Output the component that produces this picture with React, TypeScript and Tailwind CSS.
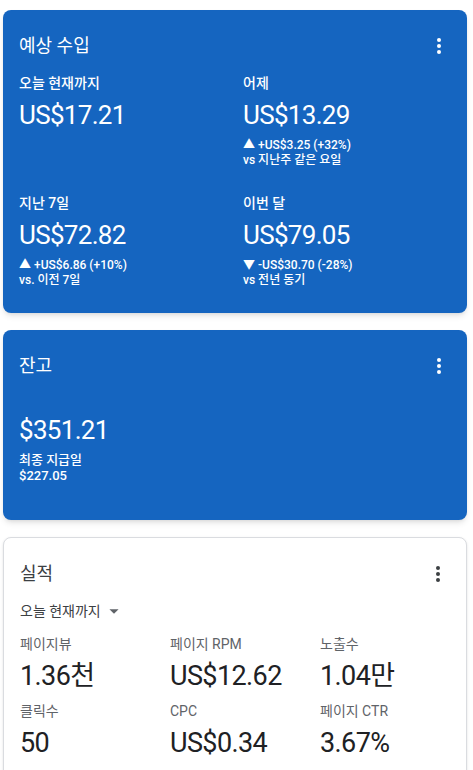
import * as React from 'react'

const font = { fontFamily: 'Roboto, "Noto Sans CJK KR", sans-serif' }

function Kebab({ color }: { color: string }) {
  return (
    <svg width="24" height="24" viewBox="0 0 24 24" className={color} fill="currentColor">
      <circle cx="12" cy="6" r="2" />
      <circle cx="12" cy="12" r="2" />
      <circle cx="12" cy="18" r="2" />
    </svg>
  )
}

function Stat({ label, value, delta, vs }: { label: string; value: string; delta?: string; vs?: string }) {
  return (
    <div className="flex flex-col">
      <div className="text-[14px] leading-[20px] font-medium">{label}</div>
      <div className="mt-[6px] text-[26px] leading-[32px] tracking-[-0.7px]">{value}</div>
      {delta && (
        <div className="mt-[7px] text-[12px] leading-[15px] font-medium">
          <div>{delta}</div>
          <div>{vs}</div>
        </div>
      )}
    </div>
  )
}

function Metric({ label, value }: { label: string; value: string }) {
  return (
    <div className="flex flex-col">
      <div className="text-[14px] leading-[20px] text-[#5f6368]">{label}</div>
      <div className="mt-[6px] text-[27px] leading-[32px] tracking-[-0.6px] text-[#202124]">{value}</div>
    </div>
  )
}

export default function App() {
  return (
    <main className="min-h-screen bg-white pl-[3px] pr-[6px] pt-[10px] flex flex-col gap-[17px]" style={font}>
      {/* Estimated earnings */}
      <section className="rounded-lg bg-[#1565c0] text-white shadow-md px-4 pt-6 pb-[25px]">
        <div className="flex items-center justify-between h-6">
          <h2 className="text-[18px] leading-6">예상 수입</h2>
          <Kebab color="text-white" />
        </div>
        <div className="mt-[15px] grid grid-cols-[224px_1fr] gap-y-[25px]">
          <Stat label="오늘 현재까지" value="US$17.21" />
          <Stat label="어제" value="US$13.29" delta="▲ +US$3.25 (+32%)" vs="vs 지난주 같은 요일" />
          <Stat label="지난 7일" value="US$72.82" delta="▲ +US$6.86 (+10%)" vs="vs. 이전 7일" />
          <Stat label="이번 달" value="US$79.05" delta="▼ -US$30.70 (-28%)" vs="vs 전년 동기" />
        </div>
      </section>

      {/* Balance */}
      <section className="rounded-lg bg-[#1565c0] text-white shadow-md px-4 pt-6 pb-[36px]">
        <div className="flex items-center justify-between h-6">
          <h2 className="text-[18px] leading-6">잔고</h2>
          <Kebab color="text-white" />
        </div>
        <div className="mt-[36px] text-[26px] leading-[32px] tracking-[-0.7px]">$351.21</div>
        <div className="mt-[6px] text-[13px] leading-[16px] font-medium">
          <div>최종 지급일</div>
          <div>$227.05</div>
        </div>
      </section>

      {/* Performance */}
      <section className="rounded-lg bg-white border border-[#dadce0] shadow-sm px-4 pt-6 pb-6">
        <div className="flex items-center justify-between h-6">
          <h2 className="text-[18px] leading-6 text-[#3c4043]">실적</h2>
          <Kebab color="text-[#3c4043]" />
        </div>
        <div className="mt-[14px] flex items-center text-[14px] leading-[20px] text-[#3c4043]">
          오늘 현재까지
          <svg width="22" height="22" viewBox="0 0 24 24" className="ml-[2px] text-[#5f6368]" fill="currentColor">
            <path d="M7 10l5 5 5-5z" />
          </svg>
        </div>
        <div className="mt-[12px] grid grid-cols-[150px_150px_1fr] gap-y-[9px]">
          <Metric label="페이지뷰" value="1.36천" />
          <Metric label="페이지 RPM" value="US$12.62" />
          <Metric label="노출수" value="1.04만" />
          <Metric label="클릭수" value="50" />
          <Metric label="CPC" value="US$0.34" />
          <Metric label="페이지 CTR" value="3.67%" />
        </div>
      </section>
    </main>
  )
}
